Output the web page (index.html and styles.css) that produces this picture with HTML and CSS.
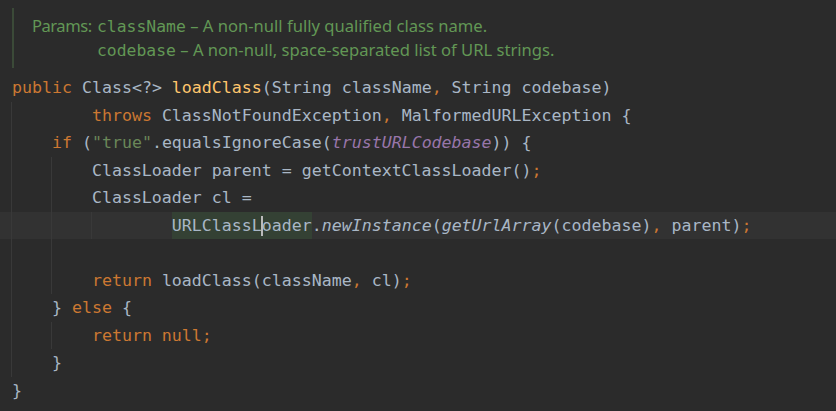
FILE: index.html
```html
<!DOCTYPE html>
<html>
<head>
<meta charset="utf-8">
<link rel="stylesheet" href="styles.css">
</head>
<body>
<div class="editor">
  <div class="doc">
    <div class="doc-label">Params:</div>
    <div class="doc-params">
      <div class="doc-row"><span class="doc-code">className</span> – A non-null fully qualified class name.</div>
      <div class="doc-row"><span class="doc-code">codebase</span> – A non-null, space-separated list of URL strings.</div>
    </div>
  </div>
  <div class="code">
    <div class="line"><span class="kw">public</span> Class&lt;?&gt; <span class="decl">loadClass</span>(String className<span class="kw">,</span> String codebase)</div>
    <div class="line g1">        <span class="kw">throws</span> ClassNotFoundException<span class="kw">,</span> MalformedURLException {</div>
    <div class="line g1">    <span class="kw">if</span> (<span class="str">"true"</span>.equalsIgnoreCase(<span class="field">trustURLCodebase</span>)) {</div>
    <div class="line g2">        ClassLoader parent = getContextClassLoader()<span class="kw">;</span></div>
    <div class="line g2">        ClassLoader cl =</div>
    <div class="line g3 current">                <span class="under-caret">URLClassL<span class="caret"></span>oader</span>.<span class="static">newInstance</span>(<span class="static">getUrlArray</span>(codebase)<span class="kw">,</span> parent)<span class="kw">;</span></div>
    <div class="line g2"> </div>
    <div class="line g2">        <span class="kw">return</span> loadClass(className<span class="kw">,</span> cl)<span class="kw">;</span></div>
    <div class="line g1">    } <span class="kw">else</span> {</div>
    <div class="line g2">        <span class="kw">return null;</span></div>
    <div class="line g1">    }</div>
    <div class="line">}</div>
  </div>
</div>
</body>
</html>
```

FILE: styles.css
```css
html, body {
  margin: 0;
  padding: 0;
  background: #2b2b2b;
}

.editor {
  width: 836px;
  height: 411px;
  overflow: hidden;
  background: #2b2b2b;
  padding-top: 8px;
  box-sizing: border-box;
}

.doc {
  margin-left: 12px;
  border-left: 2px solid #3b4a38;
  height: 60px;
  box-sizing: border-box;
  padding: 6px 0 0 18px;
  display: grid;
  grid-template-columns: 65px auto;
  font-family: "Noto Sans", sans-serif;
  font-size: 16.6px;
  line-height: 23px;
  color: #629755;
}

.doc-label {
  letter-spacing: -0.5px;
}

.doc-params {
  display: flex;
  flex-direction: column;
}

.doc-row {
  white-space: nowrap;
}

.doc-code {
  font-family: "DejaVu Sans Mono", monospace;
  font-size: 16.4px;
}

.code {
  margin-top: 6px;
  font-family: "DejaVu Sans Mono", monospace;
  font-size: 16.6px;
  line-height: 27.5px;
  color: #a9b7c6;
}

.line {
  height: 27.5px;
  padding-left: 12px;
  white-space: pre;
  background-repeat: no-repeat;
  background-size: 1px 100%;
}

.g1 {
  background-image: linear-gradient(#393939, #393939);
  background-position: 11px 0;
}

.g2 {
  background-image: linear-gradient(#393939, #393939), linear-gradient(#393939, #393939);
  background-position: 11px 0, 51px 0;
}

.g3 {
  background-image: linear-gradient(#393939, #393939), linear-gradient(#393939, #393939), linear-gradient(#393939, #393939);
  background-position: 11px 0, 51px 0, 91px 0;
}

.current {
  background-color: #323232;
}

.kw { color: #cc7832; }
.decl { color: #ffc66d; }
.str { color: #6a8759; }
.field { color: #9876aa; font-style: italic; }
.static { font-style: italic; }

.under-caret {
  background: #344134;
  position: relative;
  display: inline-block;
  height: 27.5px;
}

.caret {
  position: absolute;
  top: 4px;
  width: 2px;
  height: 20px;
  margin-left: -1px;
  background: #bbbbbb;
}
```
